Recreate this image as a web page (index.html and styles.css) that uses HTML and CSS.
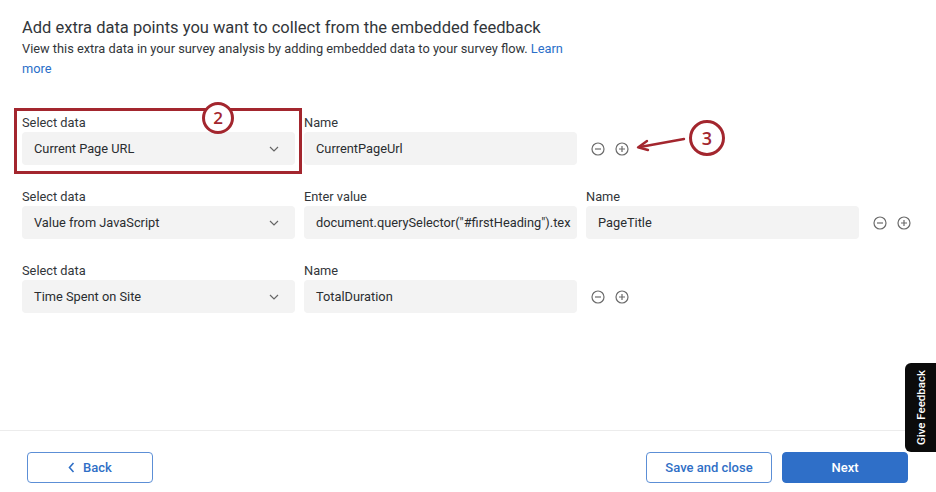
FILE: index.html
```html
<!DOCTYPE html>
<html lang="en">
<head>
    <meta charset="UTF-8">
    <meta name="viewport" content="width=device-width, initial-scale=1.0">
    <title>Embedded feedback - extra data</title>
    <link rel="stylesheet" href="styles.css">
</head>
<body>
    <div class="page">
        <div class="content">
            <h1 class="title">Add extra data points you want to collect from the embedded feedback</h1>
            <p class="lead">View this extra data in your survey analysis by adding embedded data to your survey flow. <a href="#">Learn more</a></p>

            <div class="rows">
                <div class="row">
                    <div class="field highlight">
                        <label>Select data</label>
                        <div class="select">Current Page URL
                            <svg class="chevron" width="10" height="6" viewBox="0 0 10 6"><path d="M1 1l4 4 4-4" fill="none" stroke="#666" stroke-width="1.2"/></svg>
                        </div>
                        <span class="callout callout-2">2</span>
                    </div>
                    <div class="field">
                        <label>Name</label>
                        <div class="input">CurrentPageUrl</div>
                    </div>
                    <div class="actions">
                        <svg class="icon" width="14" height="14" viewBox="0 0 14 14"><circle cx="7" cy="7" r="6" fill="none" stroke="#6b6b6b" stroke-width="1.2"/><path d="M4 7h6" stroke="#6b6b6b" stroke-width="1.2"/></svg>
                        <svg class="icon" width="14" height="14" viewBox="0 0 14 14"><circle cx="7" cy="7" r="6" fill="none" stroke="#6b6b6b" stroke-width="1.2"/><path d="M4 7h6M7 4v6" stroke="#6b6b6b" stroke-width="1.2"/></svg>
                        <svg class="arrow" width="52" height="16" viewBox="0 0 52 16"><path d="M49 3L5 11" fill="none" stroke="#a3262e" stroke-width="2.4" stroke-linecap="round"/><path d="M12 5L3 11.4 13 14" fill="none" stroke="#a3262e" stroke-width="2.4" stroke-linecap="round" stroke-linejoin="round"/></svg>
                        <span class="callout callout-3">3</span>
                    </div>
                </div>

                <div class="row">
                    <div class="field">
                        <label>Select data</label>
                        <div class="select">Value from JavaScript
                            <svg class="chevron" width="10" height="6" viewBox="0 0 10 6"><path d="M1 1l4 4 4-4" fill="none" stroke="#666" stroke-width="1.2"/></svg>
                        </div>
                    </div>
                    <div class="field">
                        <label>Enter value</label>
                        <div class="input">document.querySelector("#firstHeading").tex</div>
                    </div>
                    <div class="field">
                        <label>Name</label>
                        <div class="input">PageTitle</div>
                    </div>
                    <div class="actions">
                        <svg class="icon" width="14" height="14" viewBox="0 0 14 14"><circle cx="7" cy="7" r="6" fill="none" stroke="#6b6b6b" stroke-width="1.2"/><path d="M4 7h6" stroke="#6b6b6b" stroke-width="1.2"/></svg>
                        <svg class="icon" width="14" height="14" viewBox="0 0 14 14"><circle cx="7" cy="7" r="6" fill="none" stroke="#6b6b6b" stroke-width="1.2"/><path d="M4 7h6M7 4v6" stroke="#6b6b6b" stroke-width="1.2"/></svg>
                    </div>
                </div>

                <div class="row">
                    <div class="field">
                        <label>Select data</label>
                        <div class="select">Time Spent on Site
                            <svg class="chevron" width="10" height="6" viewBox="0 0 10 6"><path d="M1 1l4 4 4-4" fill="none" stroke="#666" stroke-width="1.2"/></svg>
                        </div>
                    </div>
                    <div class="field">
                        <label>Name</label>
                        <div class="input">TotalDuration</div>
                    </div>
                    <div class="actions">
                        <svg class="icon" width="14" height="14" viewBox="0 0 14 14"><circle cx="7" cy="7" r="6" fill="none" stroke="#6b6b6b" stroke-width="1.2"/><path d="M4 7h6" stroke="#6b6b6b" stroke-width="1.2"/></svg>
                        <svg class="icon" width="14" height="14" viewBox="0 0 14 14"><circle cx="7" cy="7" r="6" fill="none" stroke="#6b6b6b" stroke-width="1.2"/><path d="M4 7h6M7 4v6" stroke="#6b6b6b" stroke-width="1.2"/></svg>
                    </div>
                </div>
            </div>
        </div>

        <footer class="footer">
            <button class="btn btn-outline btn-back">
                <svg width="7" height="11" viewBox="0 0 7 11"><path d="M5.5 1L1.5 5.5l4 4.5" fill="none" stroke="#2f6fc6" stroke-width="1.6"/></svg>
                Back
            </button>
            <div class="footer-right">
                <button class="btn btn-outline">Save and close</button>
                <button class="btn btn-primary">Next</button>
            </div>
        </footer>
    </div>

    <div class="feedback-tab"><span>Give Feedback</span></div>
</body>
</html>
```

FILE: styles.css
```css
body {
    margin: 0;
    padding: 0;
    background-color: #fff;
    font-family: Roboto, "Liberation Sans", sans-serif;
    color: #32363a;
}
.page {
    height: 492px;
    display: flex;
    flex-direction: column;
}
.content {
    padding: 17px 0 0 22px;
}
.title {
    margin: 0;
    font-size: 16.5px;
    font-weight: 400;
    line-height: 22px;
    color: #32363a;
}
.lead {
    margin: 0;
    width: 560px;
    font-size: 12.8px;
    line-height: 20px;
    color: #32363a;
}
.lead a {
    color: #2b6fc9;
    text-decoration: none;
}
.rows {
    margin-top: 36px;
    display: flex;
    flex-direction: column;
    gap: 24px;
}
.row {
    display: flex;
    gap: 9px;
}
.field {
    position: relative;
    width: 273px;
}
.field label {
    display: block;
    font-size: 12.8px;
    line-height: 16px;
    margin-bottom: 1px;
    color: #32363a;
}
.select,
.input {
    height: 33px;
    box-sizing: border-box;
    padding: 0 12px;
    background-color: #f3f3f3;
    border-radius: 4px;
    font-size: 12.8px;
    line-height: 33px;
    white-space: nowrap;
    overflow: hidden;
    color: #2a2d30;
}
.select {
    display: flex;
    justify-content: space-between;
    align-items: center;
}
.chevron {
    margin-right: 4px;
}
.actions {
    position: relative;
    align-self: flex-end;
    height: 33px;
    display: flex;
    align-items: center;
    gap: 10px;
    margin-left: 5px;
}
.highlight::after {
    content: "";
    position: absolute;
    top: -7px;
    left: -8px;
    right: -7px;
    bottom: -9px;
    border: 3px solid #a3262e;
    pointer-events: none;
}
.callout {
    position: absolute;
    box-sizing: border-box;
    border: 3px solid #a3262e;
    border-radius: 50%;
    background-color: #fff;
    color: #a3262e;
    font-family: "Open Sans", sans-serif;
    font-weight: 600;
    text-align: center;
    z-index: 2;
}
.callout-2 {
    width: 32px;
    height: 32px;
    line-height: 26px;
    font-size: 17px;
    left: 180px;
    top: -13px;
}
.callout-3 {
    width: 36px;
    height: 36px;
    line-height: 30px;
    font-size: 18px;
    left: 98px;
    top: -12px;
}
.arrow {
    position: absolute;
    left: 44px;
    top: 4px;
}
.footer {
    margin-top: auto;
    border-top: 1px solid #ececec;
    padding: 21px 28px 9px 27px;
    display: flex;
    justify-content: space-between;
}
.footer-right {
    display: flex;
    gap: 10px;
}
.btn {
    width: 126px;
    height: 31px;
    border-radius: 4px;
    font-family: Roboto, "Liberation Sans", sans-serif;
    font-size: 13px;
    font-weight: 500;
    cursor: pointer;
}
.btn-outline {
    background-color: #fff;
    border: 1px solid #5c8fd6;
    color: #2f6fc6;
}
.btn-back {
    display: flex;
    align-items: center;
    justify-content: center;
    gap: 8px;
}
.btn-primary {
    background-color: #2f6fc8;
    border: 1px solid #2f6fc8;
    color: #fff;
}
.feedback-tab {
    position: fixed;
    right: 0;
    top: 363px;
    width: 31px;
    height: 89px;
    background-color: #0b0b0b;
    border-radius: 6px 0 0 6px;
    display: flex;
    align-items: center;
    justify-content: center;
}
.feedback-tab span {
    writing-mode: vertical-rl;
    transform: rotate(180deg);
    color: #fff;
    font-family: Roboto, "Liberation Sans", sans-serif;
    font-size: 11.5px;
    font-weight: 500;
    white-space: nowrap;
}
```
